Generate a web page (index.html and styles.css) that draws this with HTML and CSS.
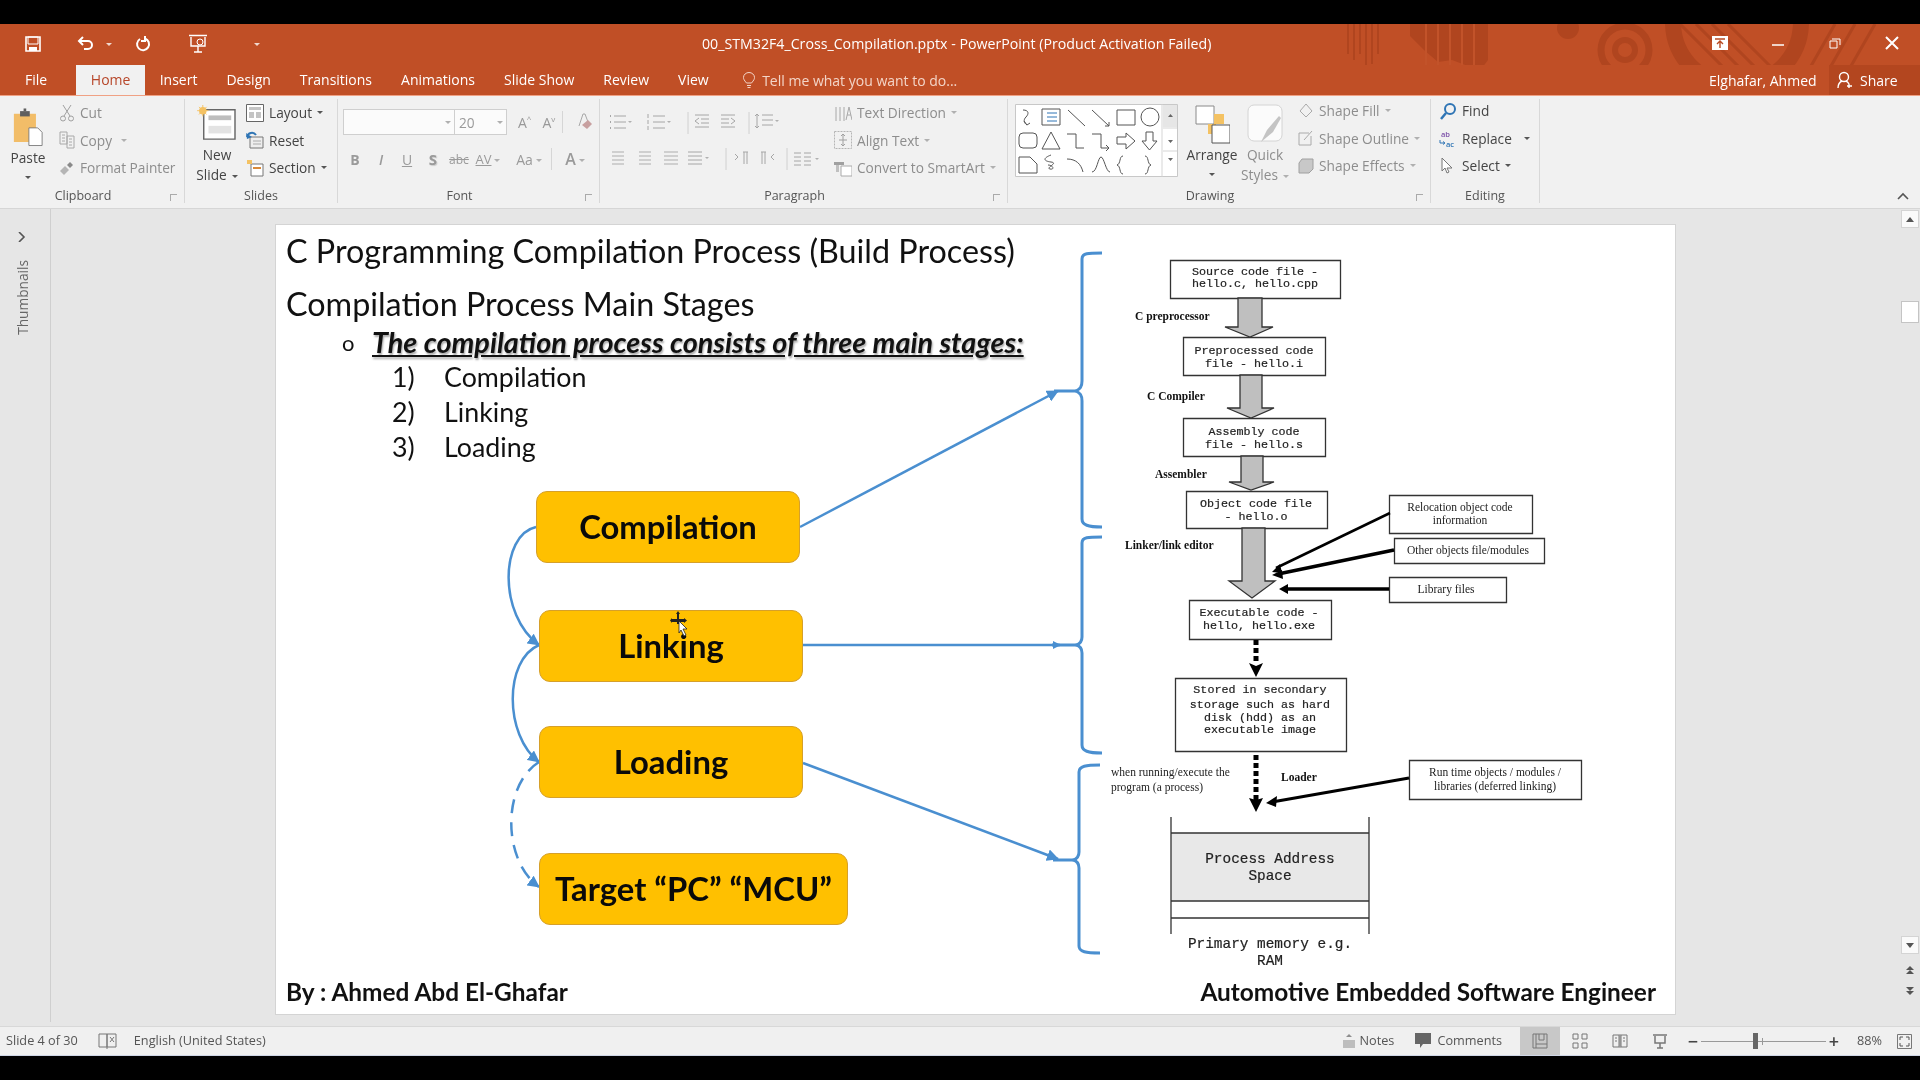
FILE: index.html
```html
<!DOCTYPE html>
<html lang="en">
<head>
    <meta charset="UTF-8">
    <title>00_STM32F4_Cross_Compilation.pptx - PowerPoint</title>
    <link rel="stylesheet" href="styles.css">
</head>
<body>
<div class="window">

    <header class="titlebar">
        <svg class="title-art" width="620" height="70" viewBox="1300 24 620 70">
            <g fill="none" stroke="#b0451f" stroke-width="2">
                <path d="M1348 24v30M1354 24v36M1360 24v30M1366 24v46M1372 24v40M1378 24v30"/>
                <circle cx="1625" cy="50" r="10" stroke-width="6"/>
                <circle cx="1625" cy="50" r="24" stroke-width="7"/>
                <circle cx="1737" cy="22" r="64" stroke-width="16"/>
            </g>
            <path d="M1410 24h78v36l-6 8-14 -2-16 -6-14 2-14-12-14-14z" fill="#b0451f"/>
            <path d="M1426 24v44M1438 24v44M1450 24v44M1462 24v44M1474 24v44" stroke="#c2532a" stroke-width="2"/>
            <circle cx="1568" cy="28" r="11" fill="#b0451f"/>
            <path d="M1680 24l70 70M1696 24l70 70M1712 24l70 70M1728 24l70 70M1835 24l-40 70M1855 24l-40 70M1875 24l-40 70" stroke="#b0451f" stroke-width="3" fill="none"/>
        </svg>
        <div class="qat">
            <svg class="qat-save" width="16" height="16" viewBox="0 0 16 16"><path d="M1 1h14v14H1z" fill="none" stroke="#fff" stroke-width="1.6"/><path d="M3 1h10v7H3z" fill="none" stroke="#fff"/><path d="M4 11h8v4H4z" fill="#fff"/></svg>
            <svg class="qat-undo" width="18" height="16" viewBox="0 0 18 16"><path d="M2 5h9a4 4 0 0 1 0 8H7M6 1L2 5l4 4" fill="none" stroke="#fff" stroke-width="2"/></svg>
            <i class="caret caret-white qat-caret"></i>
            <svg class="qat-redo" width="16" height="16" viewBox="0 0 16 16"><path d="M10 2.500a6 6 0 1 1-5 .5M10 0v5H6" fill="none" stroke="#fff" stroke-width="2"/></svg>
            <svg class="qat-show" width="20" height="20" viewBox="0 0 20 20"><path d="M1 1.500h18M3 3v9h14V3M10 12v6M6 18h8" fill="none" stroke="#fff" stroke-width="1.400"/><circle cx="12" cy="8" r="3" fill="none" stroke="#fff"/></svg>
            <i class="caret caret-white qat-more"></i>
        </div>
        <div class="doc-title">00_STM32F4_Cross_Compilation.pptx - PowerPoint (Product Activation Failed)</div>
        <div class="win-controls">
            <svg width="16" height="14" viewBox="0 0 16 14"><path d="M0 0h16v14H0z" fill="#fff"/><path d="M3 3h10M8 12V5M5 8l3-3 3 3" stroke="#b84a22" stroke-width="1.400" fill="none"/></svg>
            <svg width="12" height="14" viewBox="0 0 12 14"><path d="M0 9h12" stroke="#fff" stroke-width="1.500"/></svg>
            <svg width="12" height="14" viewBox="0 0 12 14"><path d="M3 3h8v6M1 5h7v7H1z" stroke="#fff" fill="none"/></svg>
            <svg width="14" height="14" viewBox="0 0 14 14"><path d="M1 1l12 12M13 1L1 13" stroke="#fff" stroke-width="2"/></svg>
        </div>
    </header>

    <nav class="tabs">
        <a class="tab tab-file">File</a>
        <a class="tab tab-active">Home</a>
        <a class="tab">Insert</a>
        <a class="tab">Design</a>
        <a class="tab">Transitions</a>
        <a class="tab">Animations</a>
        <a class="tab">Slide Show</a>
        <a class="tab">Review</a>
        <a class="tab">View</a>
        <div class="tell-me">
            <svg width="12" height="17" viewBox="0 0 12 17"><path d="M3.500 11C1 8 .5 7 .5 5.500a5.500 5 0 0 1 11 0C11.500 7 11 8 8.500 11zM4 13.500h4M4.500 15.500h3" fill="none" stroke="#f3d5c8"/></svg>
            <span>Tell me what you want to do...</span>
        </div>
        <div class="account">Elghafar, Ahmed</div>
        <div class="share">
            <svg width="17" height="18" viewBox="0 0 17 18"><circle cx="7" cy="6" r="4.500" fill="none" stroke="#fff" stroke-width="1.400"/><path d="M1 17c0-4 2-6 4-7M9 10c1 .5 2 1 3 3M12 13v4M10 15h5" fill="none" stroke="#fff" stroke-width="1.400"/></svg>
            <span>Share</span>
        </div>
    </nav>

    <section class="ribbon">
        <div class="group group-clipboard">
            <div class="group-body">
                <div class="big-btn paste-btn">
                    <svg width="30" height="42" viewBox="0 0 34 42"><path d="M1 6h25v32H1z" fill="#f2bd68"/><path d="M8 3h11v6H8z" fill="#5f5f5f"/><path d="M12 0h3v3h-3z" fill="#5f5f5f"/><path d="M18 22h10l5 5v15H18z" fill="#fff" stroke="#777"/></svg>
                    <span class="big-label">Paste</span>
                    <i class="caret"></i>
                </div>
                <div class="small-col">
                    <div class="row off"><svg class="ico" width="16" height="18" viewBox="0 0 16 18"><path d="M4 1l7 11M12 1L5 12" stroke="#a0a0a0" fill="none"/><circle cx="4" cy="14.500" r="2.500" fill="none" stroke="#a0a0a0"/><circle cx="12" cy="14.500" r="2.500" fill="none" stroke="#a0a0a0"/></svg>Cut</div>
                    <div class="row off"><svg class="ico" width="16" height="18" viewBox="0 0 16 18"><path d="M1 1h7v12H1zM8 5h7v12H8zM3 4h3M3 7h3M3 10h3M10 8h3M10 11h3M10 14h3" stroke="#a8a8a8" fill="none"/></svg>Copy<i class="caret caret-off caret-copy"></i></div>
                    <div class="row off"><svg class="ico" width="16" height="16" viewBox="0 0 16 16"><path d="M1 11l5-5 4 4-5 5z" fill="#b5b5b5"/><path d="M8 5l3-3 3 3-3 3z" fill="#8a8a8a"/></svg>Format Painter</div>
                </div>
            </div>
            <div class="group-label label-shift">Clipboard<i class="launcher"></i></div>
        </div>

        <div class="group group-slides">
            <div class="group-body">
                <div class="big-btn new-slide">
                    <svg width="42" height="38" viewBox="0 0 42 38"><path d="M7 5h33v31H7z" fill="#fff" stroke="#666" stroke-width="1.500"/><path d="M12 11h24v5H12z" fill="#bdbdbd"/><path d="M12 22h24v8H12z" fill="#e3e3e3"/><circle cx="6" cy="6" r="4" fill="#f4c263"/><path d="M6 0v12M0 6h12M2 2l8 8M10 2l-8 8" stroke="#f4c263"/></svg>
                    <span class="big-label new-label">New<br>Slide<i class="caret"></i></span>
                </div>
                <div class="small-col">
                    <div class="row"><svg class="ico" width="18" height="18" viewBox="0 0 18 18"><path d="M.5 .5h17v17H.500z" fill="#fff" stroke="#666"/><path d="M3 3h12v3H3zM3 8h5v6H3zM10 8h5v6h-5z" fill="#c4c4c4"/></svg>Layout<i class="caret"></i></div>
                    <div class="row"><svg class="ico" width="18" height="18" viewBox="0 0 18 18"><path d="M4 6h13v11H4z" fill="#eee" stroke="#777"/><path d="M7 10h8M7 13h8" stroke="#aaa"/><path d="M1 6a5 5 0 0 1 9-2" fill="none" stroke="#2f75b5" stroke-width="2"/><path d="M0 2l1 6 5-2z" fill="#2f75b5"/></svg>Reset</div>
                    <div class="row"><svg class="ico" width="18" height="18" viewBox="0 0 18 18"><path d="M5 5h12v12H5z" fill="#fff" stroke="#777"/><path d="M7 9h8" stroke="#d98a3a" stroke-width="2"/><path d="M1 1h5v4H1z" fill="#f4c263"/></svg>Section<i class="caret"></i></div>
                </div>
            </div>
            <div class="group-label">Slides</div>
        </div>

        <div class="group group-font">
            <div class="group-body group-stack">
                <div class="font-top">
                    <div class="font-name"><i class="caret caret-off"></i></div>
                    <div class="font-size">20<i class="caret caret-off"></i></div>
                    <span class="glyph grow-a">A<sup>^</sup></span>
                    <span class="glyph shrink-a">A<sup>v</sup></span>
                    <i class="vsep"></i>
                    <svg class="clear-ico" width="16" height="18" viewBox="0 0 16 18"><path d="M2 13L6 1h2l3 8" fill="none" stroke="#a8a8a8"/><path d="M5 12l6-5 4 4-5 5z" fill="#c8a0a0"/></svg>
                </div>
                <div class="font-bottom">
                    <span class="f-btn bold">B</span>
                    <span class="f-btn ital">I</span>
                    <span class="f-btn under">U</span>
                    <span class="f-btn shad">S</span>
                    <span class="f-btn strike">abc</span>
                    <span class="f-btn av">AV<i class="caret caret-off"></i></span>
                    <span class="f-btn aa">Aa<i class="caret caret-off"></i></span>
                    <i class="vsep vsep-low"></i>
                    <span class="f-btn big-a">A<i class="caret caret-off"></i></span>
                </div>
            </div>
            <div class="group-label label-shift">Font<i class="launcher"></i></div>
        </div>

        <div class="group group-para">
            <div class="group-body">
                <svg class="para-icons" width="226" height="66" viewBox="0 0 226 66">
                    <g fill="none" stroke="#a6a6a6">
                        <path d="M12 6h12M12 12h12M12 18h12"/><path d="M8 6h1M8 12h1M8 18h1" stroke-width="2"/>
                        <path d="M51 6h12M51 12h12M51 18h12"/><path d="M46 4v4M46 10v4M46 16v4"/>
                        <path d="M86 2v22" stroke="#d0d0d0"/>
                        <path d="M93 5h14M99 9h8M99 13h8M93 17h14M97 8l-4 3 4 3" />
                        <path d="M119 5h14M119 9h8M119 13h8M119 17h14M129 8l4 3-4 3"/>
                        <path d="M147 2v22" stroke="#d0d0d0"/>
                        <path d="M160 5h11M160 10h11M160 15h11M155 4v14M153 6l2-2 2 2M153 16l2 2 2-2"/>
                        <path d="M10 42h12M10 46h12M10 50h12M10 54h12" stroke="#cfcfcf" stroke-width="2"/>
                        <path d="M37 42h12M37 46h12M37 50h12M37 54h12" stroke="#cfcfcf" stroke-width="2"/>
                        <path d="M62 42h14M62 46h14M62 50h14M62 54h14" stroke="#cfcfcf" stroke-width="2"/>
                        <path d="M86 42h14M86 46h14M86 50h14M86 54h14"/>
                        <path d="M124 38v22" stroke="#d0d0d0"/>
                        <path d="M133 44l3 3-3 3M141 42h5M142 42v12M145 42v12"/>
                        <path d="M164 42h-5M163 42v12M160 42v12M172 44l-3 3 3 3"/>
                        <path d="M185 38v22" stroke="#d0d0d0"/>
                        <path d="M192 43h7M192 47h7M192 51h7M192 55h7M202 43h7M202 47h7M202 51h7M202 55h7"/>
                    </g>
                    <path d="M26 11h4l-2 2zM65 11h4l-2 2zM173 10h4l-2 2zM103 47h4l-2 2zM213 48h4l-2 2z" fill="#b0b0b0"/>
                </svg>
                <div class="small-col para-col">
                    <div class="row off"><svg class="ico" width="18" height="18" viewBox="0 0 18 18"><path d="M2 3v14M6 3v14M10 3v14" stroke="#a8a8a8" fill="none"/><path d="M12 16l3-13 3 13M13 11h4" stroke="#a8a8a8" fill="none"/></svg>Text Direction<i class="caret caret-off"></i></div>
                    <div class="row off"><svg class="ico" width="18" height="18" viewBox="0 0 18 18"><path d="M.5 .5h17v17H.500z" fill="none" stroke="#b5b5b5" stroke-dasharray="2 1"/><path d="M5 9h8M9 3v12M7 5l2-2 2 2M7 13l2 2 2-2" stroke="#a0a0a0" fill="none"/></svg>Align Text<i class="caret caret-off"></i></div>
                    <div class="row off"><svg class="ico" width="18" height="18" viewBox="0 0 18 18"><path d="M7 7h11v10H7z" fill="#fff" stroke="#aaa"/><path d="M0 3h10v3H0z" fill="#a0a0a0"/><path d="M2 6h3v7H2z" fill="#c0c0c0"/></svg>Convert to SmartArt<i class="caret caret-off"></i></div>
                </div>
            </div>
            <div class="group-label label-shift">Paragraph<i class="launcher"></i></div>
        </div>

        <div class="group group-draw">
            <div class="group-body">
                <svg class="gallery" width="163" height="73" viewBox="0 0 163 73">
                    <path d="M.5 .5h162v72H.500z" fill="#fff" stroke="#c8c8c8"/>
                    <path d="M147 .5v72" stroke="#d5d5d5"/>
                    <path d="M148 1h14v22h-14z" fill="#e6e6e6"/>
                    <path d="M153 13h5l-2.500-3zM153 36h5l-2.500 3zM152 49h7M153 54h5l-2.500 3z" fill="#666"/>
                    <path d="M148 24h14M148 47h14" stroke="#d5d5d5"/>
                    <g fill="none" stroke="#555">
                        <path d="M8 6c6 0 6 4 3 7s-2 6 1 8M9 17l3 4 3-2"/>
                        <path d="M27 5h18v16H27z"/><path d="M32 9h10M32 13h10M32 17h10" stroke="#2f75b5"/>
                        <path d="M53 6l17 16"/>
                        <path d="M77 6l17 16M94 18v4h-4"/>
                        <path d="M102 6h18v15h-18z"/>
                        <circle cx="135" cy="13" r="9"/>
                        <rect x="4" y="29" width="18" height="15" rx="4"/>
                        <path d="M36 28l9 17H27z"/>
                        <path d="M52 30h9v14h8"/>
                        <path d="M77 30h9v14h8M91 41l3 3-3 3"/>
                        <path d="M102 33h9v-4l9 8-9 8v-5h-9z"/>
                        <path d="M131 28h7v9h4l-7.500 9-7.500-9h4z"/>
                        <path d="M4 53h11l7 7v9H4z"/>
                        <path d="M36 51c-8 3-8 6 0 7s-6 6-1 7 3-4-2-4"/>
                        <path d="M52 55c9 0 14 5 16 13"/>
                        <path d="M77 68c5 0 6-15 9-15s5 15 9 15"/>
                        <path d="M108 52c-4 0-2 8-6 9 4 1 2 9 6 9"/>
                        <path d="M130 52c4 0 2 8 6 9-4 1-2 9-6 9"/>
                    </g>
                </svg>
                <div class="big-btn arrange">
                    <svg width="36" height="40" viewBox="0 0 36 40"><path d="M2 2h18v18H2z" fill="#fff" stroke="#8a8a8a"/><path d="M20 10h10v10H20zM14 20h8v10h-8z" fill="#f4c263"/><path d="M18 21h18v18H18z" fill="#fff" stroke="#555"/></svg>
                    <span class="big-label">Arrange</span>
                    <i class="caret"></i>
                </div>
                <div class="big-btn quick off">
                    <svg width="36" height="40" viewBox="0 0 36 40"><rect x="1" y="1" width="34" height="36" rx="6" fill="#fbfbfb" stroke="#d4d4d4"/><path d="M14 38l6-12 12-14 2 2-8 14z" fill="#c4c4c4"/></svg>
                    <span class="big-label">Quick<br>Styles<i class="caret caret-off"></i></span>
                </div>
                <div class="small-col shape-col">
                    <div class="row off"><svg class="ico" width="16" height="16" viewBox="0 0 16 16"><path d="M8 1l6 7-6 6-6-6z" fill="none" stroke="#aaa"/></svg>Shape Fill<i class="caret caret-off"></i></div>
                    <div class="row off"><svg class="ico" width="16" height="16" viewBox="0 0 16 16"><path d="M1 3h10M1 3v12h12V6M6 10l8-9" fill="none" stroke="#aaa"/></svg>Shape Outline<i class="caret caret-off"></i></div>
                    <div class="row off"><svg class="ico" width="16" height="16" viewBox="0 0 16 16"><path d="M4 1h11v10l-4 4H1V5z" fill="#c8c8c8" stroke="#a0a0a0"/></svg>Shape Effects<i class="caret caret-off"></i></div>
                </div>
            </div>
            <div class="group-label label-shift">Drawing<i class="launcher"></i></div>
        </div>

        <div class="group group-edit">
            <div class="group-body">
                <div class="small-col edit-col">
                    <div class="row"><svg class="ico" width="18" height="18" viewBox="0 0 18 18"><circle cx="11" cy="7" r="5" fill="none" stroke="#2f75b5" stroke-width="2"/><path d="M7 11l-5 6" stroke="#2f75b5" stroke-width="2.500"/></svg>Find</div>
                    <div class="row"><svg class="ico" width="18" height="21" viewBox="0 0 18 21"><text class="rep-ab" x="2" y="9">ab</text><text class="rep-ac" x="7" y="19">ac</text><path d="M1 12v3h4M4 13.500l2 1.500-2 1.500" stroke="#2f75b5" fill="none"/></svg>Replace<i class="caret caret-far"></i></div>
                    <div class="row"><svg class="ico" width="18" height="18" viewBox="0 0 18 18"><path d="M3 1v13l3-3 2 5 2-1-2-4h5z" fill="#fff" stroke="#777"/></svg>Select<i class="caret"></i></div>
                </div>
            </div>
            <div class="group-label">Editing</div>
        </div>

        <svg class="collapse" width="12" height="8" viewBox="0 0 12 8"><path d="M1 7l5-5 5 5" fill="none" stroke="#555" stroke-width="1.600"/></svg>
    </section>

    <main class="workspace">
        <aside class="thumbs">
            <svg class="thumbs-arrow" width="8" height="10" viewBox="0 0 8 10"><path d="M1 0l5 5-5 5" fill="none" stroke="#555" stroke-width="1.600"/></svg>
            <span class="thumbs-label">Thumbnails</span>
        </aside>

        <div class="stage">
            <article class="slide">
                <h1 class="slide-title">C Programming Compilation Process (Build Process)</h1>
                <h2 class="slide-sub">Compilation Process Main Stages</h2>
                <p class="slide-lead"><span class="lead-dot">o</span><span class="lead-text">The compilation process consists of three main stages:</span></p>
                <ol class="slide-list">
                    <li><span>1)</span>Compilation</li>
                    <li><span>2)</span>Linking</li>
                    <li><span>3)</span>Loading</li>
                </ol>

                <svg class="slide-art" width="1401" height="789" viewBox="275 224 1401 789">
                    <defs>
                        <marker id="blueHead" markerWidth="8" markerHeight="8" refX="7" refY="4" orient="auto" markerUnits="userSpaceOnUse" viewBox="0 0 8 8"><path d="M0 0l8 4-8 4z" fill="#4a8fd0"/></marker>
                        <marker id="blueBig" markerWidth="12" markerHeight="12" refX="11" refY="6" orient="auto" markerUnits="userSpaceOnUse" viewBox="0 0 12 12"><path d="M0 0l12 6-12 6z" fill="#4a8fd0"/></marker>
                    </defs>

                    <g class="brace">
                        <path d="M1102 253c-14 0-20 0-20 6v122c0 6-2 8-6 10 4 2 6 4 6 10v118c0 6 6 8 20 8"/>
                        <path d="M1102 537c-14 0-20 0-20 6v94c0 5-2 7-6 8 4 1 6 3 6 8v92c0 6 6 8 20 8"/>
                        <path d="M1100 765c-14 0-21 1-21 7v80c0 5-2 7-6 8 4 1 6 3 6 8v78c0 6 7 7 21 7"/>
                        <path d="M1076 391h-22M1076 645h-24M1073 860h-20"/>
                    </g>
                    <g class="flow-blue">
                        <path d="M800 527L1058 391" marker-end="url(#blueBig)"/>
                        <path d="M802 645H1060" marker-end="url(#blueHead)"/>
                        <path d="M803 763L1058 859" marker-end="url(#blueBig)"/>
                        <path d="M536 527C500 535 498 615 539 645" marker-end="url(#blueBig)"/>
                        <path d="M539 645C504 660 504 735 539 762" marker-end="url(#blueBig)"/>
                        <path d="M539 762C502 785 502 860 539 887" stroke-dasharray="14 9" marker-end="url(#blueBig)"/>
                    </g>

                    <g class="chart-box">
                        <path d="M1170.500 260.500h170v38h-170z"/>
                        <path d="M1183.500 337.500h142v38h-142z"/>
                        <path d="M1183.500 418.500h142v38h-142z"/>
                        <path d="M1186.500 491.500h141v37h-141z"/>
                        <path d="M1189.500 600.500h142v39h-142z"/>
                        <path d="M1175.500 678.500h171v73h-171z"/>
                        <path d="M1389.500 495.500h143v38h-143z"/>
                        <path d="M1394.500 538.500h150v25h-150z"/>
                        <path d="M1389.500 577.500h117v25h-117z"/>
                        <path d="M1409.500 760.500h172v39h-172z"/>
                    </g>
                    <g class="chart-arrow">
                        <path d="M1238 298h24v29h11l-23 10-25-10h13z"/>
                        <path d="M1240 375h22v33h12l-23 10-24-10h13z"/>
                        <path d="M1241 456h22v26h11l-23 8-22-8h12z"/>
                        <path d="M1242 528h23v53h10l-23 17-23-17h13z"/>
                    </g>
                    <g class="chart-line">
                        <path d="M1390 513L1276 568" stroke-width="2.500"/>
                        <path d="M1394 550L1278 574" stroke-width="3.500"/>
                        <path d="M1389 589H1284" stroke-width="3.500"/>
                        <path d="M1409 778L1272 802" stroke-width="3"/>
                        <path d="M1256 640v24M1256 755v46" stroke-width="5" stroke-dasharray="5 3"/>
                    </g>
                    <path d="M1280 564l-8 8 10 1zM1282 570l-10 5 11 4zM1279 589l9-5v10zM1266 803l11-7-1 11zM1249 663l7 3 7-3-7 14zM1249 798l7 2 7-2-7 14z" fill="#000"/>
                    <path d="M1171 833h198v68h-198z" fill="#e8e8e8"/>
                    <path d="M1171 817v117M1369 817v117M1171 833h198M1171 901h198M1171 918h198" stroke="#333" stroke-width="1.300" fill="none"/>

                    <g class="mono" text-anchor="middle">
                        <text x="1255" y="275">Source code file -</text>
                        <text x="1255" y="287">hello.c, hello.cpp</text>
                        <text x="1254" y="354">Preprocessed code</text>
                        <text x="1254" y="367">file - hello.i</text>
                        <text x="1254" y="435">Assembly code</text>
                        <text x="1254" y="448">file - hello.s</text>
                        <text x="1256" y="507">Object code file</text>
                        <text x="1256" y="520">- hello.o</text>
                        <text x="1259" y="616">Executable code -</text>
                        <text x="1259" y="629">hello, hello.exe</text>
                        <text x="1260" y="693">Stored in secondary</text>
                        <text x="1260" y="708">storage such as hard</text>
                        <text x="1260" y="721">disk (hdd) as an</text>
                        <text x="1260" y="733">executable image</text>
                        <text class="mono-big" x="1270" y="863">Process Address</text>
                        <text class="mono-big" x="1270" y="880">Space</text>
                        <text class="mono-big" x="1270" y="948">Primary memory e.g.</text>
                        <text class="mono-big" x="1270" y="965">RAM</text>
                    </g>
                    <g class="serif-bold">
                        <text x="1135" y="320">C preprocessor</text>
                        <text x="1147" y="400">C Compiler</text>
                        <text x="1155" y="478">Assembler</text>
                        <text x="1125" y="549">Linker/link editor</text>
                        <text x="1281" y="781">Loader</text>
                    </g>
                    <g class="serif">
                        <text x="1460" y="511" text-anchor="middle">Relocation object code</text>
                        <text x="1460" y="524" text-anchor="middle">information</text>
                        <text x="1468" y="554" text-anchor="middle">Other objects file/modules</text>
                        <text x="1446" y="593" text-anchor="middle">Library files</text>
                        <text x="1495" y="776" text-anchor="middle">Run time objects / modules /</text>
                        <text x="1495" y="790" text-anchor="middle">libraries (deferred linking)</text>
                        <text x="1111" y="776">when running/execute the</text>
                        <text x="1111" y="791">program (a process)</text>
                    </g>
                </svg>

                <div class="stage-box box-compile">Compilation</div>
                <div class="stage-box box-link">Linking</div>
                <div class="stage-box box-load">Loading</div>
                <div class="stage-box box-target">Target “PC” “MCU”</div>

                <svg class="cursor" width="22" height="30" viewBox="0 0 22 30"><path d="M8 0l2 3H9v5h5V7l3 2.500-3 2.500v-1H9v2H7v-2H2v1L0 9.500 2 7v1h5V3H6z" fill="#222"/><path d="M9 10l8 8h-4l3 6-2 1-3-6-2 3z" fill="#fff" stroke="#222" stroke-width=".8"/></svg>

                <footer class="slide-foot">
                    <span>By : Ahmed Abd El-Ghafar</span>
                    <span>Automotive Embedded Software Engineer</span>
                </footer>
            </article>
        </div>

        <aside class="vscroll">
            <span class="vs-btn vs-up"><i></i></span>
            <span class="vs-thumb"></span>
            <span class="vs-fill"></span>
            <span class="vs-btn vs-down"><i></i></span>
            <svg class="vs-page" width="10" height="10" viewBox="0 0 10 10"><path d="M1 5l4-4 4 4zM1 9l4-4 4 4z" fill="#555"/></svg>
            <svg class="vs-page" width="10" height="10" viewBox="0 0 10 10"><path d="M1 1l4 4 4-4zM1 5l4 4 4-4z" fill="#555"/></svg>
        </aside>
    </main>

    <footer class="statusbar">
        <span class="st-text st-slide">Slide 4 of 30</span>
        <svg class="st-book" width="19" height="16" viewBox="0 0 19 16"><path d="M1 1h8v13H1zM9 1h9v13H9zM9 14v2" fill="none" stroke="#777"/><path d="M12 4l4 5M16 4l-4 5" stroke="#777"/></svg>
        <span class="st-text st-lang">English (United States)</span>
        <span class="st-spring"></span>
        <svg class="st-ico" width="14" height="16" viewBox="0 0 14 16"><path d="M1 7h12v8H1z" fill="#bdbdbd"/><path d="M4 4l3-3 3 3z" fill="#8e8e8e"/></svg>
        <span class="st-text st-notes">Notes</span>
        <svg class="st-ico st-ico-c" width="16" height="16" viewBox="0 0 16 16"><path d="M0 0h16v11H8l-3 4v-4H0z" fill="#666"/></svg>
        <span class="st-text st-comments">Comments</span>
        <div class="views">
            <span class="view view-on"><svg width="16" height="16" viewBox="0 0 16 16"><path d="M1 1h14v14H1zM4 1v14M4 11h11M7 1v6h5V1" fill="none" stroke="#777"/></svg></span>
            <span class="view"><svg width="16" height="16" viewBox="0 0 16 16"><path d="M1 1h5v5H1zM10 1h5v5h-5zM1 10h5v5H1zM10 10h5v5h-5z" fill="none" stroke="#777"/></svg></span>
            <span class="view"><svg width="16" height="16" viewBox="0 0 16 16"><path d="M1 2h6v12H1zM9 2h6v12H9zM8 1v14M3 5h2M3 8h2M11 5h2M11 8h2" fill="none" stroke="#777"/></svg></span>
            <span class="view"><svg width="16" height="16" viewBox="0 0 16 16"><path d="M1 2h14M3 3v7h10V3M8 10v5M5 15h6" fill="none" stroke="#777" stroke-width="1.500"/></svg></span>
        </div>
        <div class="zoom">
            <span class="z-sign">−</span>
            <span class="z-track"><i class="z-thumb"></i><i class="z-mid"></i></span>
            <span class="z-sign">+</span>
        </div>
        <span class="st-text st-pct">88%</span>
        <svg class="st-fit" width="15" height="15" viewBox="0 0 15 15"><path d="M.5 .5h14v14H.500z" fill="none" stroke="#777"/><path d="M3 6V3h3M12 6V3H9M3 9v3h3M12 9v3H9" fill="none" stroke="#555"/></svg>
    </footer>
</div>
</body>
</html>
```

FILE: styles.css
```css
* {
    box-sizing: border-box;
}

html, body {
    margin: 0;
    height: 100%;
    background: #000;
    overflow: hidden;
}

/* the reference is a video frame, so everything is a little soft */
.window {
    width: 1920px;
    height: 1032px;
    margin-top: 24px;
    font-family: "Open Sans", "Noto Sans", sans-serif;
    font-size: 13.700px;
    color: #444;
    background: #e6e6e6;
    display: flex;
    flex-direction: column;
    filter: blur(.35px);
}

/* title bar */
.titlebar {
    height: 41px;
    background: #c04f26;
    color: #fff;
    display: flex;
    position: relative;
    font-size: 14.200px;
}

.title-art {
    position: absolute;
    right: 0;
    top: 0;
}

.qat {
    width: 280px;
    display: flex;
    align-items: center;
    padding-bottom: 1px;
}

.qat-save { margin-left: 25px; }
.qat-undo { margin-left: 36px; }
.qat .qat-caret { margin-left: 11px; }
.qat-redo { margin-left: 23px; }
.qat-show { margin-left: 37px; }
.qat .qat-more { margin-left: 46px; }

.doc-title {
    position: relative;
    margin-left: 422px;
    line-height: 40px;
    white-space: nowrap;
}

.win-controls {
    position: absolute;
    right: 21px;
    top: 12px;
    display: flex;
    width: 187px;
    justify-content: space-between;
}

/* tabs */
.tabs {
    height: 30px;
    background: #c04f26;
    color: #fff;
    display: flex;
    align-items: center;
    position: relative;
    font-size: 14px;
}

.tab {
    height: 30px;
    line-height: 30px;
    padding: 0 14.500px;
}

.tab-file {
    margin-left: 25px;
    margin-right: 29px;
    padding: 0;
}

.tab-active {
    background: #f1f1f1;
    color: #b7472a;
    width: 69px;
    text-align: center;
    padding: 0;
}

.tell-me {
    margin-left: 20px;
    display: flex;
    align-items: center;
    gap: 7px;
    color: #f3d5c8;
}

.account {
    position: absolute;
    left: 1709px;
}

.share {
    position: absolute;
    left: 1829px;
    right: 0;
    height: 30px;
    background: #b3461f;
    display: flex;
    align-items: center;
    gap: 6px;
    padding-left: 8px;
}

/* ribbon */
.ribbon {
    height: 114px;
    background: #f1f1f1;
    border-top: 1px solid #f0a184;
    border-bottom: 1px solid #d6d6d6;
    display: flex;
    position: relative;
    align-items: flex-start;
}

.group {
    margin-top: 3px;
    height: 104px;
    border-right: 1px solid #d8d8d8;
    display: flex;
    flex-direction: column;
    flex: none;
    position: relative;
}

.group-clipboard { width: 185px; }
.group-slides { width: 153px; }
.group-font { width: 262px; }
.group-para { width: 408px; }
.group-draw { width: 423px; }
.group-edit { width: 109px; }

.group-body {
    height: 86px;
    display: flex;
    flex: none;
}

.group-stack {
    flex-direction: column;
}

.group-label {
    height: 16px;
    line-height: 16px;
    margin-top: 3px;
    flex: none;
    font-size: 12.500px;
    text-align: center;
    color: #555;
}

.label-shift {
    padding-right: 18px;
}

.launcher {
    position: absolute;
    right: 7px;
    bottom: 2px;
    width: 7px;
    height: 7px;
    border-left: 1px solid #aaa;
    border-top: 1px solid #aaa;
}

.big-btn {
    display: flex;
    flex-direction: column;
    align-items: center;
    flex: none;
    line-height: 20px;
}

.big-label {
    text-align: center;
}

.paste-btn {
    width: 56px;
    padding-top: 7px;
}

.paste-btn .caret,
.arrange .caret {
    margin-top: 8px;
    margin-left: 0;
}

.new-slide {
    width: 60px;
    margin-left: 2px;
    padding-top: 6px;
}

.new-label {
    margin-top: 4px;
}

.small-col {
    display: flex;
    flex-direction: column;
}

.row {
    height: 27.500px;
    display: flex;
    align-items: center;
    white-space: nowrap;
}

.ico {
    flex: none;
    margin-right: 5px;
}

.off {
    color: #8d8d8d;
}

.rep-ab, .rep-ac {
    font-size: 7.500px;
    font-weight: 600;
}

.rep-ab { fill: #7b4fa8; }
.rep-ac { fill: #2f75b5; }

.group-clipboard .small-col { margin-left: 3px; }
.group-slides .small-col { margin-left: -1px; }

.caret {
    display: inline-block;
    width: 0;
    height: 0;
    margin-left: 5px;
    border-left: 3px solid transparent;
    border-right: 3px solid transparent;
    border-top: 3px solid #555;
    vertical-align: middle;
}

.caret-white { border-top-color: #f0d9cf; margin-left: 0; }
.caret-off { border-top-color: #b0b0b0; }
.caret-far { margin-left: 12px; }
.caret-copy { margin-left: 9px; }

/* font group */
.font-top {
    margin-top: 10px;
    margin-left: 5px;
    display: flex;
    align-items: center;
    height: 26px;
}

.font-name, .font-size {
    height: 26px;
    background: #fbfbfb;
    border: 1px solid #cfcfcf;
    display: flex;
    align-items: center;
    justify-content: space-between;
    padding-right: 3px;
}

.font-name { width: 112px; justify-content: flex-end; }
.font-size { width: 52px; border-left: 0; padding-left: 4px; color: #9a9a9a; }

.glyph {
    color: #999;
    font-size: 14px;
}

.glyph sup { font-size: 8px; }
.grow-a { margin-left: 11px; }
.shrink-a { margin-left: 11px; }

.vsep {
    width: 1px;
    height: 22px;
    background: #d6d6d6;
    margin: 0 14px 0 7px;
}

.vsep-low { margin: 0 8px 0 4px; }

.font-bottom {
    margin-top: 11px;
    margin-left: 4px;
    display: flex;
    align-items: center;
    height: 26px;
    color: #9a9a9a;
}

.f-btn {
    width: 26px;
    text-align: center;
    white-space: nowrap;
    font-size: 14px;
}

.bold { font-weight: 700; }
.ital { font-style: italic; font-weight: 600; }
.under { text-decoration: underline; }
.shad { font-weight: 700; text-shadow: 1px 1px 1px #ccc; font-size: 15px; }
.strike { text-decoration: line-through; font-size: 12px; }
.av { width: 34px; font-size: 13px; text-decoration: underline; margin-left: -1px; }
.av .caret, .aa .caret, .big-a .caret { margin-left: 3px; }
.aa { width: 36px; margin-left: 6px; }
.big-a { width: 30px; font-size: 16px; font-weight: 600; }

/* paragraph group */
.para-icons {
    margin: 11px 0 0 2px;
    flex: none;
}

.para-col {
    margin-left: 6px;
}

/* drawing group */
.gallery {
    margin: 5px 0 0 7px;
    flex: none;
}

.arrange {
    width: 62px;
    margin-left: 3px;
    padding-top: 5px;
}

.arrange .big-label { margin-top: 1px; }

.quick {
    width: 50px;
    margin-left: -3px;
    padding-top: 5px;
}

.quick .big-label { margin-top: 1px; }

.shape-col {
    margin-left: 8px;
    margin-top: -2px;
}

.edit-col {
    margin-left: 8px;
    margin-top: -2px;
}

.collapse {
    position: absolute;
    right: 11px;
    bottom: 8px;
}

/* workspace */
.workspace {
    height: 818px;
    display: flex;
    border-bottom: 1px solid #d8d8d8;
}

.thumbs {
    width: 51px;
    flex: none;
    border-right: 1px solid #cfcfcf;
    margin-bottom: 4px;
    display: flex;
    flex-direction: column;
    align-items: center;
    padding: 23px 6px 0 0;
    color: #666;
}

.thumbs-label {
    writing-mode: vertical-rl;
    transform: rotate(180deg);
    margin-top: 18px;
}

.stage {
    flex: 1;
    padding: 15px 0 0 224px;
}

.slide {
    width: 1401px;
    height: 791px;
    background: #fff;
    border: 1px solid #d4d4d4;
    position: relative;
    font-family: Lato, "Open Sans", sans-serif;
    color: #111;
    padding: 5px 0 0 10px;
}

.slide-title {
    margin: 0;
    font-size: 32.300px;
    font-weight: 400;
    line-height: 42px;
}

.slide-sub {
    margin: 11px 0 0;
    font-size: 32.300px;
    font-weight: 400;
    line-height: 42px;
}

.slide-lead {
    margin: 0;
    display: flex;
    align-items: center;
    line-height: 35px;
}

.lead-dot {
    margin-left: 56px;
    width: 30px;
    font-size: 22px;
}

.lead-text {
    font-size: 28.800px;
    font-weight: 700;
    font-style: italic;
    text-decoration: underline;
    text-shadow: 1px 2px 2px #aaa;
}

.slide-list {
    margin: 0;
    padding: 0 0 0 106px;
    list-style: none;
    font-size: 26.800px;
    line-height: 35px;
}

.slide-list span {
    display: inline-block;
    width: 52px;
}

.slide-art {
    position: absolute;
    left: -1px;
    top: -1px;
}

.brace path, .flow-blue path {
    fill: none;
    stroke: #4a8fd0;
    stroke-width: 2.500;
}

.brace path {
    stroke-width: 3;
}

.chart-box path {
    fill: #fff;
    stroke: #333;
    stroke-width: 1.300;
}

.chart-arrow path {
    fill: #bfbfbf;
    stroke: #333;
    stroke-width: 1.300;
}

.chart-line path {
    fill: none;
    stroke: #000;
}

.mono text {
    font-family: "Liberation Mono", monospace;
    font-size: 11.700px;
    fill: #222;
    stroke: #222;
    stroke-width: .2;
}

.mono .mono-big {
    font-size: 14.400px;
}

.serif-bold text {
    font-family: "Liberation Serif", serif;
    font-size: 11.500px;
    font-weight: 700;
    fill: #111;
}

.serif text {
    font-family: "Liberation Serif", serif;
    font-size: 11.500px;
    fill: #222;
}

.stage-box {
    position: absolute;
    height: 72px;
    background: #ffc000;
    border: 1px solid #d6a02a;
    border-radius: 11px;
    display: flex;
    align-items: center;
    justify-content: center;
    font-size: 32.800px;
    font-weight: 700;
    color: #0a0a0a;
    padding-bottom: 1px;
}

.box-compile { left: 260px; top: 266px; width: 264px; }
.box-link { left: 263px; top: 385px; width: 264px; }
.box-load { left: 263px; top: 501px; width: 264px; }
.box-target { left: 263px; top: 628px; width: 309px; }

.cursor {
    position: absolute;
    left: 394px;
    top: 386px;
}

.slide-foot {
    position: absolute;
    left: 10px;
    right: 19px;
    top: 752px;
    display: flex;
    justify-content: space-between;
    font-size: 24.400px;
    font-weight: 700;
}

/* right scroller */
.vscroll {
    width: 20px;
    flex: none;
    display: flex;
    flex-direction: column;
    align-items: center;
    padding-top: 1px;
}

.vs-btn {
    width: 18px;
    height: 18px;
    background: #fafafa;
    border: 1px solid #d4d4d4;
    display: flex;
    align-items: center;
    justify-content: center;
    flex: none;
}

.vs-btn i {
    width: 0;
    height: 0;
    border-left: 4px solid transparent;
    border-right: 4px solid transparent;
}

.vs-up i { border-bottom: 5px solid #555; }
.vs-down i { border-top: 5px solid #555; }

.vs-thumb {
    width: 18px;
    height: 22px;
    margin-top: 73px;
    background: #fff;
    border: 1px solid #c4c4c4;
    flex: none;
}

.vs-fill {
    flex: none;
    height: 613px;
}

.vs-page {
    margin-top: 11px;
    flex: none;
}

/* status bar */
.statusbar {
    flex: 1;
    background: #f0f0f0;
    border-bottom: 1px solid #cfd6e6;
    display: flex;
    align-items: center;
    font-size: 12.700px;
    color: #555;
}

.st-text { margin-bottom: 2px; }
.st-slide { margin-left: 6px; }
.st-book { margin-left: 20px; }
.st-lang { margin-left: 17px; }
.st-spring { flex: 1; }
.st-notes { margin-left: 4px; margin-right: 21px; }
.st-ico-c { margin-right: 6px; }
.st-comments { margin-right: 18px; }

.views {
    display: flex;
    height: 100%;
}

.view {
    width: 40px;
    display: flex;
    align-items: center;
    justify-content: center;
}

.view-on {
    background: #c8c8c8;
}

.zoom {
    display: flex;
    align-items: center;
    margin-left: 7px;
}

.z-sign {
    font-size: 18px;
    font-weight: 600;
    width: 12px;
    text-align: center;
    color: #444;
}

.z-track {
    width: 125px;
    height: 1px;
    background: #999;
    position: relative;
    margin: 0 2px;
}

.z-thumb {
    position: absolute;
    left: 52px;
    top: -8px;
    width: 5px;
    height: 16px;
    background: #666;
}

.z-mid {
    position: absolute;
    left: 61px;
    top: -3px;
    width: 1px;
    height: 7px;
    background: #999;
}

.st-pct { margin-left: 17px; }
.st-fit { margin: 0 8px 0 15px; }
```
